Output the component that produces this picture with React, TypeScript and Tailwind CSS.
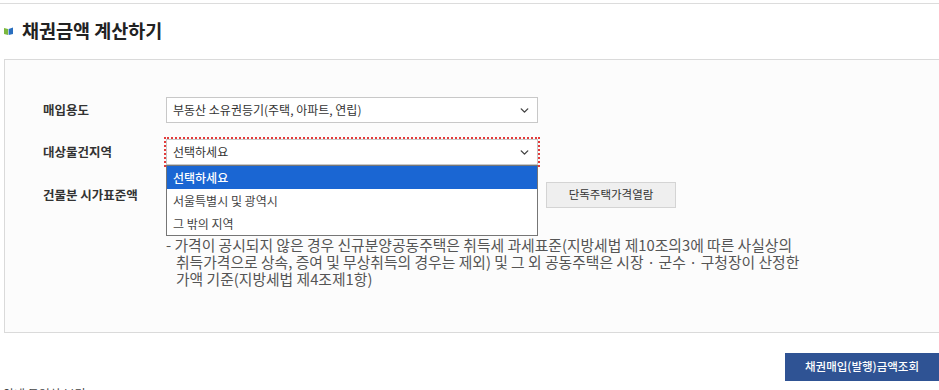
import { ChevronDown } from 'lucide-react';

const font = { fontFamily: '"Noto Sans CJK KR", "Noto Sans", sans-serif' };

function TitleIcon() {
  return (
    <svg width="9" height="8" viewBox="0 0 9 8" className="shrink-0">
      <path d="M0 1 L4 2 L4 8 L0 7 Z" fill="#7cb83e" />
      <path d="M4.6 2 L9 0.6 L9 7 L4.6 8 Z" fill="#2a6fbf" />
    </svg>
  );
}

function SelectBox({ value, focused }: { value: string; focused?: boolean }) {
  return (
    <div
      className={
        'flex h-[26px] w-[372px] items-center justify-between border border-[#c8c8c8] bg-white pl-[6px] pr-[6px] text-[12px] text-[#333] ' +
        (focused ? 'outline-2 outline-dotted outline-[#e23b3b]' : '')
      }
    >
      <span>{value}</span>
      <ChevronDown size={13} strokeWidth={2.6} className="text-[#444]" />
    </div>
  );
}

const options = ['선택하세요', '서울특별시 및 광역시', '그 밖의 지역'];

export default function App() {
  return (
    <div className="relative h-[390px] w-[939px] overflow-hidden bg-white" style={font}>
      <div className="mt-[3px] border-t border-[#dcdcdc]" />

      <div className="mt-[15px] flex h-[24px] items-center gap-[9px] pl-[4px]">
        <TitleIcon />
        <h2 className="text-[18.5px] font-bold text-[#222]">채권금액 계산하기</h2>
      </div>

      <div className="ml-[4px] mt-[16px] h-[274px] w-[960px] border border-[#dadada] bg-[#fcfcfc] pl-[38px] pt-[37px]">
        <div className="flex items-center">
          <div className="w-[123px] text-[12.5px] font-bold text-[#333]">매입용도</div>
          <SelectBox value="부동산 소유권등기(주택, 아파트, 연립)" />
        </div>

        <div className="mt-[16px] flex items-center">
          <div className="w-[123px] text-[12.5px] font-bold text-[#333]">대상물건지역</div>
          <div className="relative z-10">
            <SelectBox value="선택하세요" focused />
            <ul className="absolute left-0 top-full w-[372px] border border-[#767676] bg-white text-[12px] text-[#444]">
              {options.map((o, i) => (
                <li
                  key={o}
                  className={
                    'flex h-[23px] items-center pl-[6px] ' +
                    (i === 0 ? 'bg-[#1a66d3] font-medium text-white' : '')
                  }
                >
                  {o}
                </li>
              ))}
            </ul>
          </div>
        </div>

        <div className="mt-[17px] flex items-center">
          <div className="w-[123px] text-[12.5px] font-bold text-[#333]">건물분 시가표준액</div>
          <input className="h-[26px] w-[372px] border border-[#c8c8c8] bg-white" />
          <button className="ml-[8px] h-[26px] w-[130px] border border-[#d4d4d4] bg-[#efefef] text-[11.5px] text-[#333]">
            단독주택가격열람
          </button>
        </div>

        <p className="mt-[28px] ml-[123px] pl-[10px] -indent-[10px] text-[14.8px] leading-[17px] text-[#555]">
          - 가격이 공시되지 않은 경우 신규분양공동주택은 취득세 과세표준(지방세법 제10조의3에 따른 사실상의
          <br />
          취득가격으로 상속, 증여 및 무상취득의 경우는 제외) 및 그 외 공동주택은 시장 · 군수 · 구청장이 산정한
          <br />
          가액 기준(지방세법 제4조제1항)
        </p>
      </div>

      <div className="mt-[20px] flex justify-end">
        <button className="h-[28px] w-[154px] bg-[#2f5394] text-[11.5px] font-medium text-white">
          채권매입(발행)금액조회
        </button>
      </div>

      <div className="mt-[5px] pl-[3px] text-[12px] leading-[16px] text-[#444]">안내 동영상 보기</div>
    </div>
  );
}
